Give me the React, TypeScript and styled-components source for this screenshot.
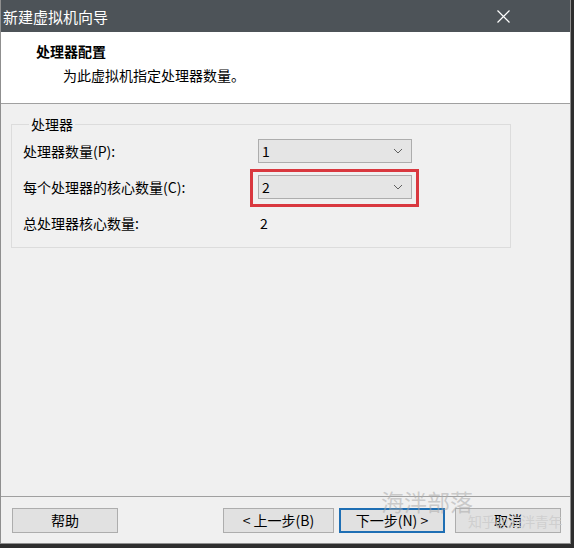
import styled, { createGlobalStyle, css } from 'styled-components';

const Global = createGlobalStyle`
  html, body { margin: 0; padding: 0; background: #2e2e2e; }
  body { font-family: "Noto Sans CJK SC", "Noto Sans", sans-serif; }
`

const Window = styled.div`
  position: relative;
  width: 569px;
  height: 543px;
  border: 1px solid #8f8f8f;
  border-top: none;
  background: #f0f0f0;
  display: flex;
  flex-direction: column;
  overflow: hidden;
`

const TitleBar = styled.div`
  height: 32px;
  background: #4d5358;
  color: #fff;
  display: flex;
  align-items: center;
  justify-content: space-between;
  padding: 0 60px 0 2px;
  font-size: 15px;
  line-height: 1;
`

const Header = styled.div`
  height: 72px;
  background: #fff;
  border-bottom: 1px solid #a0a0a0;
  display: flex;
  flex-direction: column;
  padding: 9px 0 0 35px;
  box-sizing: border-box;
`

const HeaderTitle = styled.div`
  font-size: 14px;
  font-weight: bold;
  line-height: 20px;
  color: #000;
`

const HeaderSub = styled.div`
  font-size: 14px;
  line-height: 20px;
  color: #000;
  padding: 4px 0 0 27px;
`

const Content = styled.div`
  flex: 1;
  padding: 11px 0 0 10px;
`

const Group = styled.fieldset`
  width: 500px;
  box-sizing: border-box;
  margin: 0;
  border: 1px solid #dcdcdc;
  padding: 0 0 0 11px;
  height: 133px;
`

const Legend = styled.legend`
  font-size: 14px;
  line-height: 18px;
  padding: 0 2px;
  margin-left: 6px;
  color: #000;
`

const Rows = styled.div`
  display: grid;
  grid-template-columns: 235px 154px;
  grid-auto-rows: 36px;
  align-items: center;
`

const Label = styled.div`
  font-size: 14px;
  line-height: 20px;
  color: #000;
`

const Value = styled.div`
  font-size: 14px;
  line-height: 20px;
  padding-left: 2px;
  color: #000;
`

const Select = styled.div<{ $highlight?: boolean }>`
  position: relative;
  height: 24px;
  box-sizing: border-box;
  background: #e5e5e5;
  border: 1px solid #adadad;
  display: flex;
  align-items: center;
  justify-content: space-between;
  padding: 0 8px 0 3px;
  font-size: 14px;
  color: #000;
  ${(p) =>
    p.$highlight &&
    css`
      &::after {
        content: '';
        position: absolute;
        top: -7px;
        left: -9px;
        right: -8px;
        bottom: -9px;
        border: 3px solid #d9383f;
      }
    `}
`

const Footer = styled.div`
  height: 46px;
  border-top: 1px solid #a0a0a0;
  display: flex;
  align-items: center;
  padding: 0 9px 0 11px;
`

const Button = styled.div<{ $primary?: boolean; $w?: number }>`
  width: ${(p) => p.$w ?? 106}px;
  height: 25px;
  box-sizing: border-box;
  background: #e1e1e1;
  border: ${(p) => (p.$primary ? '2px solid #1f6fb4' : '1px solid #adadad')};
  display: flex;
  align-items: center;
  justify-content: center;
  font-size: 14px;
  color: #000;
  margin-left: ${(p) => (p.$primary ? '5px' : '10px')};
  &:first-child { margin-left: 0; }
`

const Spacer = styled.div`
  flex: 1;
`

const Watermark = styled.div`
  position: absolute;
  left: 380px;
  top: 484px;
  font-family: "Liberation Serif", "Noto Sans CJK SC", serif;
  font-size: 23px;
  color: rgba(170, 170, 170, 0.55);
  pointer-events: none;
`

const Watermark2 = styled.div`
  position: absolute;
  left: 467px;
  top: 511px;
  font-size: 14px;
  letter-spacing: -0.5px;
  color: rgba(205, 205, 205, 0.9);
  pointer-events: none;
`

function Chevron() {
  return (
    <svg width="10" height="6" viewBox="0 0 10 6">
      <path d="M1 1 L5 5 L9 1" fill="none" stroke="#606060" strokeWidth="1" />
    </svg>
  )
}

function CloseIcon() {
  return (
    <svg width="13" height="13" viewBox="0 0 13 13">
      <path d="M0.5 0.5 L12.5 12.5 M12.5 0.5 L0.5 12.5" stroke="#fff" strokeWidth="1.2" />
    </svg>
  )
}

function App() {
  return (
    <>
      <Global />
      <Window>
        <TitleBar>
          <span>新建虚拟机向导</span>
          <CloseIcon />
        </TitleBar>
        <Header>
          <HeaderTitle>处理器配置</HeaderTitle>
          <HeaderSub>为此虚拟机指定处理器数量。</HeaderSub>
        </Header>
        <Content>
          <Group>
            <Legend>处理器</Legend>
            <Rows>
              <Label>处理器数量(P):</Label>
              <Select>
                <span>1</span>
                <Chevron />
              </Select>
              <Label>每个处理器的核心数量(C):</Label>
              <Select $highlight>
                <span>2</span>
                <Chevron />
              </Select>
              <Label>总处理器核心数量:</Label>
              <Value>2</Value>
            </Rows>
          </Group>
        </Content>
        <Footer>
          <Button>帮助</Button>
          <Spacer />
          <Button $w={111}>&lt; 上一步(B)</Button>
          <Button $primary>下一步(N) &gt;</Button>
          <Button>取消</Button>
        </Footer>
        <Watermark>海泮部落</Watermark>
        <Watermark2>知乎@海泮青年</Watermark2>
      </Window>
    </>
  )
}

export default App
